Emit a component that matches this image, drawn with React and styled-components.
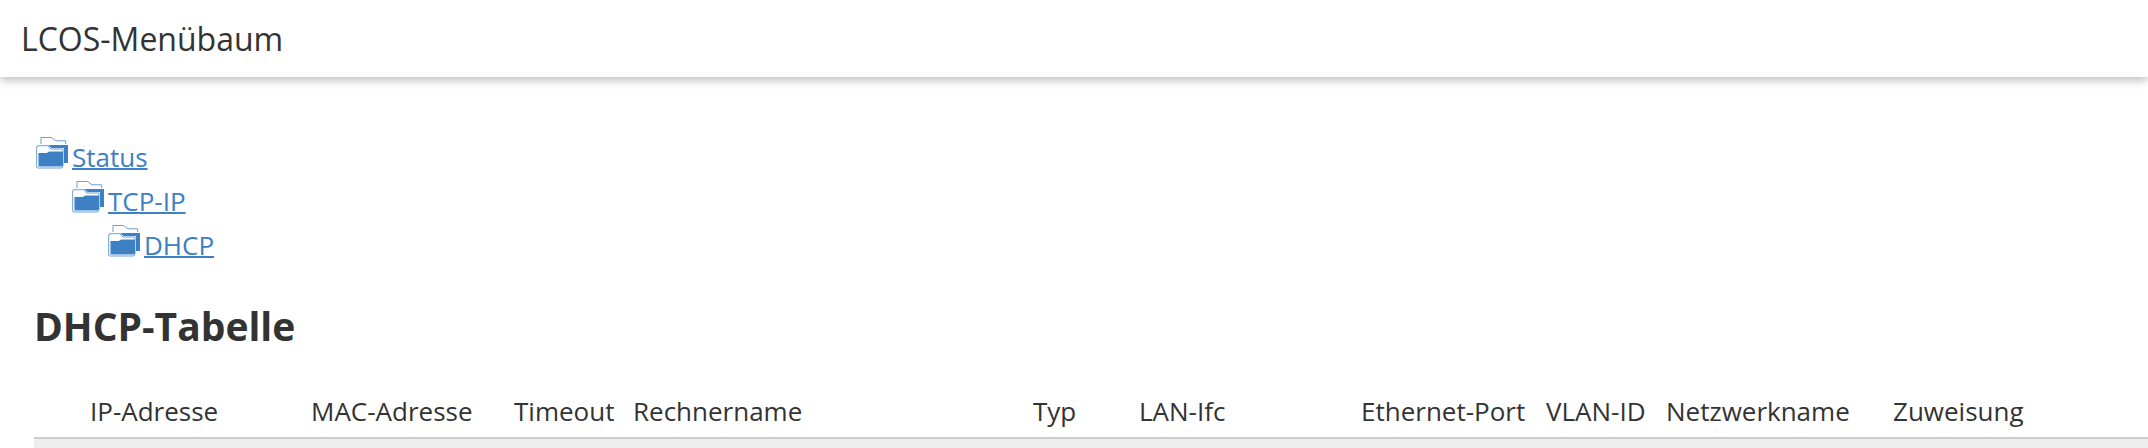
import React from "react";
import styled, { createGlobalStyle } from "styled-components";

const Global = createGlobalStyle`
  html, body { margin: 0; padding: 0; background: #fff; overflow: hidden; }
  body { font-family: "Open Sans", "Liberation Sans", sans-serif; color: #333; }
`;

const Header = styled.header`
  height: 77px;
  padding-left: 21px;
  display: flex;
  align-items: center;
  background: #fff;
  box-shadow: 0 3px 9px rgba(0, 0, 0, 0.27);
`;

const HeaderTitle = styled.h1`
  margin: 0;
  font-size: 32px;
  font-weight: 400;
  color: #333;
`;

const Content = styled.main`
  padding: 58px 0 0 34px;
`;

const Tree = styled.ul`
  margin: 0;
  padding: 0;
  list-style: none;
`;

const TreeRow = styled.li`
  height: 44px;
  padding-left: ${(p) => p.$level * 36}px;
  display: flex;
  align-items: center;
`;

const TreeLink = styled.a`
  margin-left: 4px;
  font-size: 26px;
  line-height: 44px;
  color: #3d80c4;
  text-decoration: underline;
  text-decoration-thickness: 2px;
`;

const Heading = styled.h2`
  margin: 34px 0 0;
  font-size: 39px;
  line-height: 50px;
  font-weight: 700;
  color: #333;
`;

const TableHead = styled.div`
  margin-top: 37px;
  height: 49px;
  display: grid;
  grid-template-columns: 56px 221px 203px 119px 400px 106px 222px 185px 120px 227px 1fr;
  align-items: start;
  border-bottom: 2px solid #ccc;
`;

const HeadCell = styled.div`
  font-size: 26px;
  line-height: 47px;
  white-space: nowrap;
  color: #333;
`;

const TableBody = styled.div`
  height: 10px;
  background: #eee;
`;

const FolderSvg = styled.svg`
  flex: none;
  margin: -8px 0 0 2px;
`;

const FolderIcon = () => (
  <FolderSvg width="32" height="32" viewBox="0 0 32 32" fill="none">
    <path d="M5 7V.5H15.5L20 3.8H29.7V7" stroke="#6a9fd6" strokeWidth="1" />
    <path d="M12 8H32V26H28V11H15.5Z" fill="#3d80c4" />
    <path
      d="M.7 30V10Q.7 8.7 2 8.7H11.7L14.7 12H27V28.5Q27 31 25 31H2Q.7 31 .7 30Z"
      fill="#fff"
      stroke="#6a9fd6"
      strokeWidth="1"
    />
    <path d="M2.5 29.5V16H10.7L13.3 14.5H27V27.5Q27 29.5 25 29.5Z" fill="#3d80c4" />
  </FolderSvg>
);

const treeItems = ["Status", "TCP-IP", "DHCP"];
const columns = [
  "",
  "IP-Adresse",
  "MAC-Adresse",
  "Timeout",
  "Rechnername",
  "Typ",
  "LAN-Ifc",
  "Ethernet-Port",
  "VLAN-ID",
  "Netzwerkname",
  "Zuweisung",
];

export default function App() {
  return (
    <>
      <Global />
      <Header>
        <HeaderTitle>LCOS-Menübaum</HeaderTitle>
      </Header>
      <Content>
        <Tree>
          {treeItems.map((item, i) => (
            <TreeRow key={item} $level={i}>
              <FolderIcon />
              <TreeLink href="#">{item}</TreeLink>
            </TreeRow>
          ))}
        </Tree>
        <Heading>DHCP-Tabelle</Heading>
        <TableHead>
          {columns.map((col, i) => (
            <HeadCell key={i}>{col}</HeadCell>
          ))}
        </TableHead>
        <TableBody />
      </Content>
    </>
  );
}
